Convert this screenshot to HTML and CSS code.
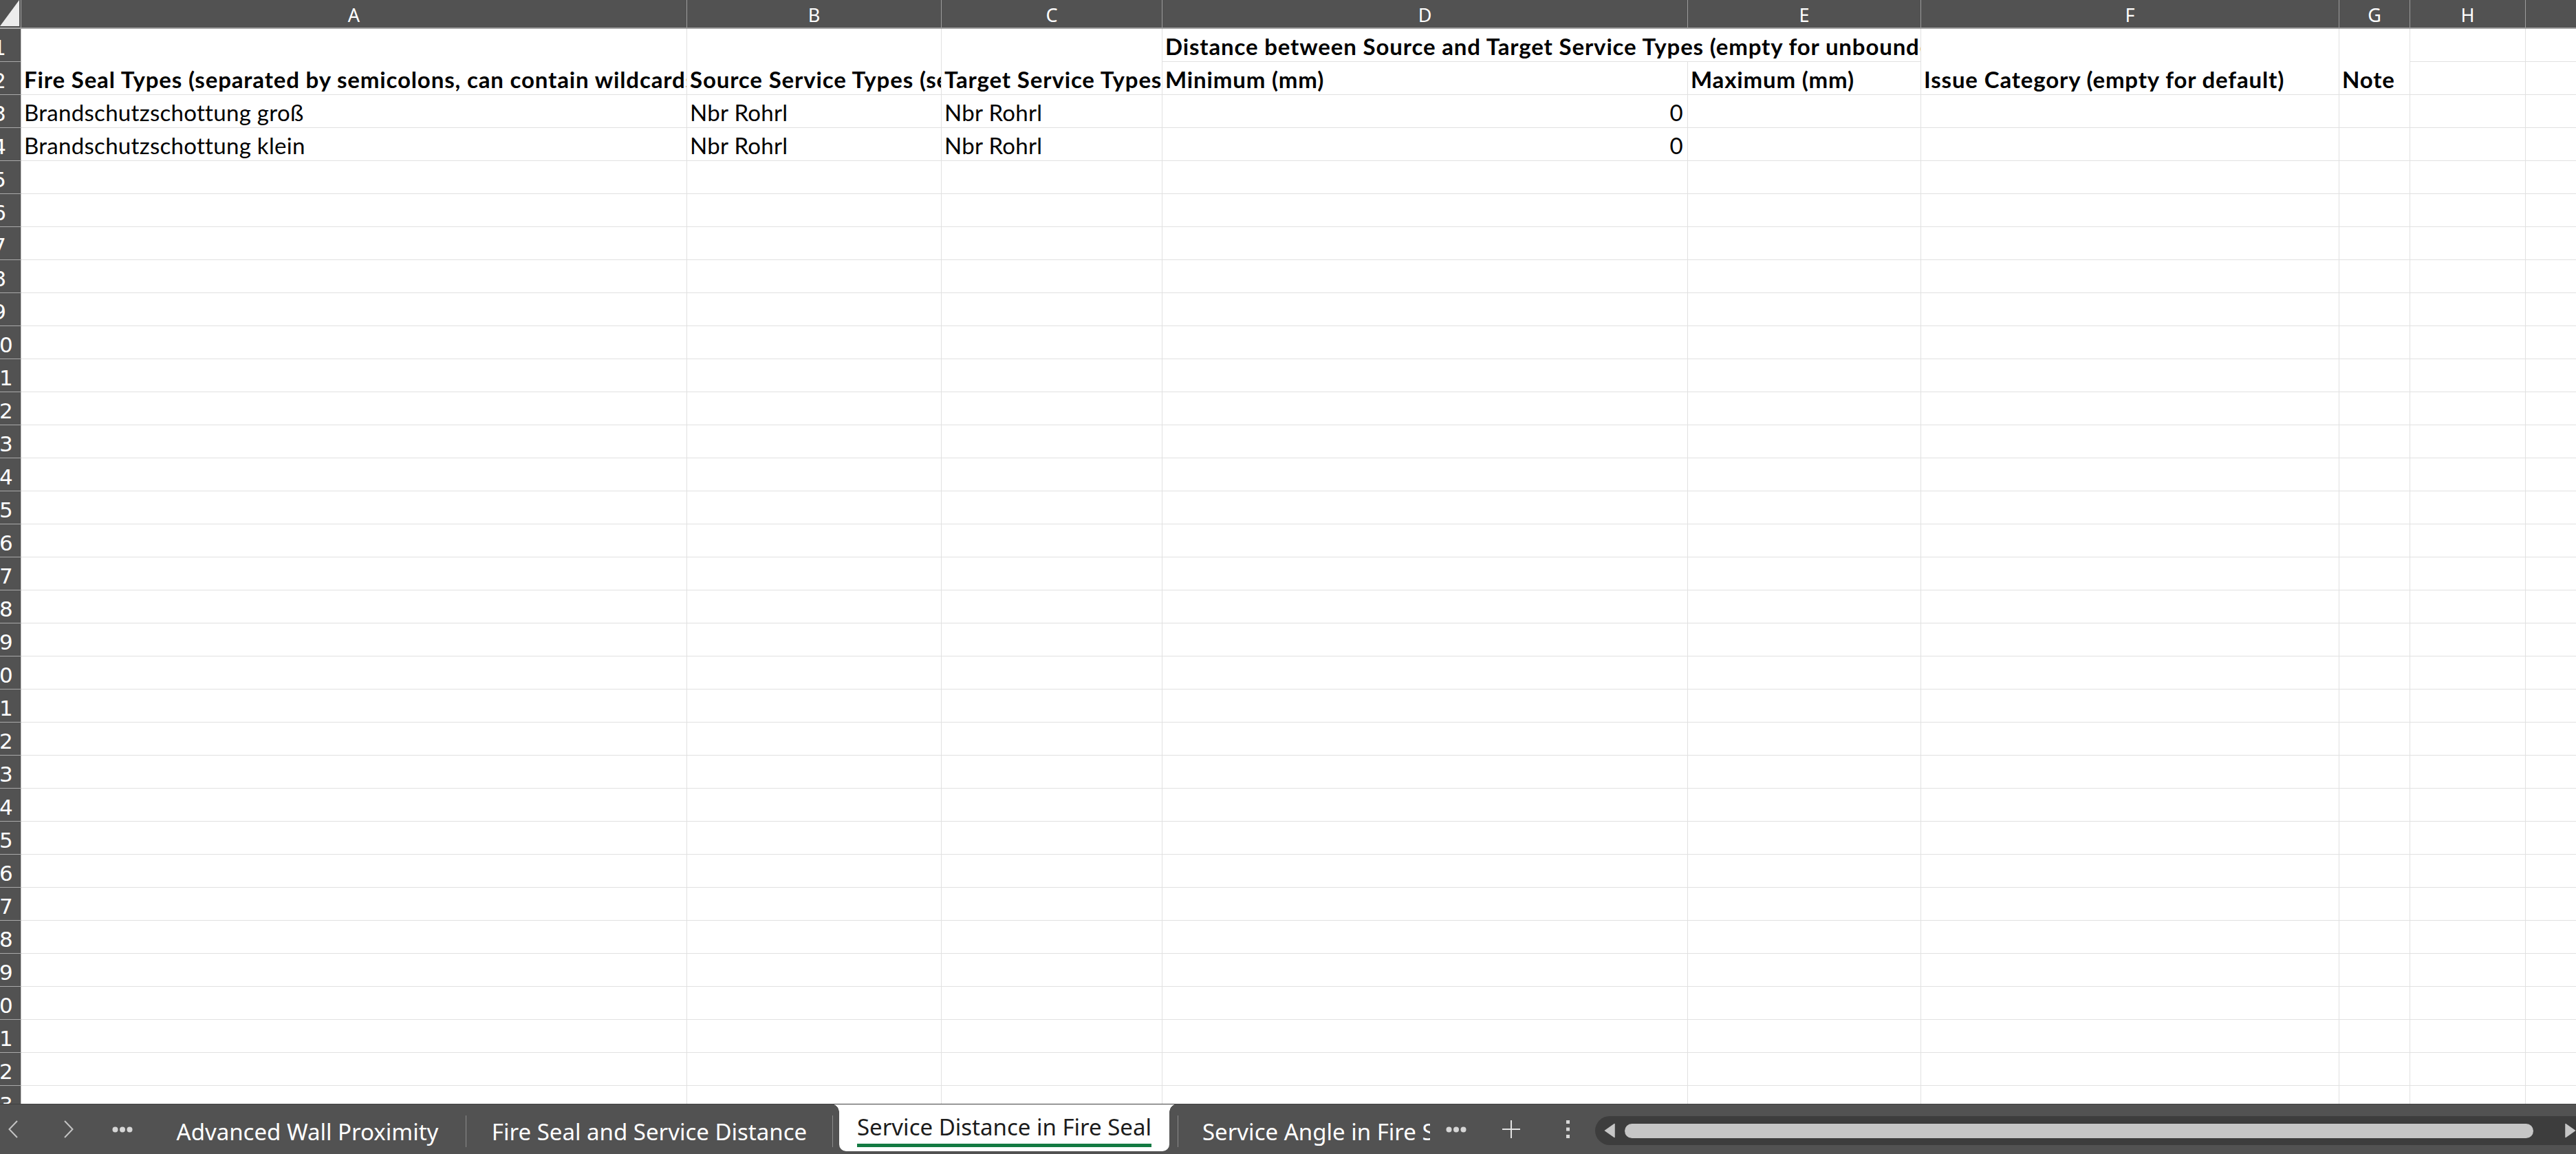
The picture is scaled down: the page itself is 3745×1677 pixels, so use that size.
FILE: index.html
```html
<!DOCTYPE html>
<html lang="de">
<head>
<meta charset="utf-8">
<title>Service Distance in Fire Seal</title>
<link rel="stylesheet" href="styles.css">
</head>
<body>
<div class="app">
  <div class="sheet">
    <div class="corner"></div>
    <div class="ch">A</div><div class="ch">B</div><div class="ch">C</div><div class="ch">D</div><div class="ch">E</div><div class="ch">F</div><div class="ch">G</div><div class="ch">H</div><div class="ch">I</div>

    <div class="rh"><span>1</span></div>
    <div class="c b v2">Fire Seal Types (separated by semicolons, can contain wildcards)</div>
    <div class="c b v2">Source Service Types (separated by semicolons, can contain wildcards)</div>
    <div class="c b v2">Target Service Types (separated by semicolons, can contain wildcards)</div>
    <div class="c b h2">Distance between Source and Target Service Types (empty for unbounded)</div>
    <div class="c b v2">Issue Category (empty for default)</div>
    <div class="c b v2">Note</div>
    <div class="c"></div><div class="c"></div>

    <div class="rh"><span>2</span></div>
    <div class="c b">Minimum (mm)</div>
    <div class="c b">Maximum (mm)</div>
    <div class="c"></div><div class="c"></div>

    <div class="rh"><span>3</span></div><div class="c">Brandschutzschottung groß</div><div class="c">Nbr Rohrl</div><div class="c">Nbr Rohrl</div><div class="c r">0</div><div class="c"></div><div class="c"></div><div class="c"></div><div class="c"></div><div class="c"></div>
    <div class="rh"><span>4</span></div><div class="c">Brandschutzschottung klein</div><div class="c">Nbr Rohrl</div><div class="c">Nbr Rohrl</div><div class="c r">0</div><div class="c"></div><div class="c"></div><div class="c"></div><div class="c"></div><div class="c"></div>
    <div class="rh"><span>5</span></div><div class="c"></div><div class="c"></div><div class="c"></div><div class="c"></div><div class="c"></div><div class="c"></div><div class="c"></div><div class="c"></div><div class="c"></div>
    <div class="rh"><span>6</span></div><div class="c"></div><div class="c"></div><div class="c"></div><div class="c"></div><div class="c"></div><div class="c"></div><div class="c"></div><div class="c"></div><div class="c"></div>
    <div class="rh"><span>7</span></div><div class="c"></div><div class="c"></div><div class="c"></div><div class="c"></div><div class="c"></div><div class="c"></div><div class="c"></div><div class="c"></div><div class="c"></div>
    <div class="rh"><span>8</span></div><div class="c"></div><div class="c"></div><div class="c"></div><div class="c"></div><div class="c"></div><div class="c"></div><div class="c"></div><div class="c"></div><div class="c"></div>
    <div class="rh"><span>9</span></div><div class="c"></div><div class="c"></div><div class="c"></div><div class="c"></div><div class="c"></div><div class="c"></div><div class="c"></div><div class="c"></div><div class="c"></div>
    <div class="rh"><span>10</span></div><div class="c"></div><div class="c"></div><div class="c"></div><div class="c"></div><div class="c"></div><div class="c"></div><div class="c"></div><div class="c"></div><div class="c"></div>
    <div class="rh"><span>11</span></div><div class="c"></div><div class="c"></div><div class="c"></div><div class="c"></div><div class="c"></div><div class="c"></div><div class="c"></div><div class="c"></div><div class="c"></div>
    <div class="rh"><span>12</span></div><div class="c"></div><div class="c"></div><div class="c"></div><div class="c"></div><div class="c"></div><div class="c"></div><div class="c"></div><div class="c"></div><div class="c"></div>
    <div class="rh"><span>13</span></div><div class="c"></div><div class="c"></div><div class="c"></div><div class="c"></div><div class="c"></div><div class="c"></div><div class="c"></div><div class="c"></div><div class="c"></div>
    <div class="rh"><span>14</span></div><div class="c"></div><div class="c"></div><div class="c"></div><div class="c"></div><div class="c"></div><div class="c"></div><div class="c"></div><div class="c"></div><div class="c"></div>
    <div class="rh"><span>15</span></div><div class="c"></div><div class="c"></div><div class="c"></div><div class="c"></div><div class="c"></div><div class="c"></div><div class="c"></div><div class="c"></div><div class="c"></div>
    <div class="rh"><span>16</span></div><div class="c"></div><div class="c"></div><div class="c"></div><div class="c"></div><div class="c"></div><div class="c"></div><div class="c"></div><div class="c"></div><div class="c"></div>
    <div class="rh"><span>17</span></div><div class="c"></div><div class="c"></div><div class="c"></div><div class="c"></div><div class="c"></div><div class="c"></div><div class="c"></div><div class="c"></div><div class="c"></div>
    <div class="rh"><span>18</span></div><div class="c"></div><div class="c"></div><div class="c"></div><div class="c"></div><div class="c"></div><div class="c"></div><div class="c"></div><div class="c"></div><div class="c"></div>
    <div class="rh"><span>19</span></div><div class="c"></div><div class="c"></div><div class="c"></div><div class="c"></div><div class="c"></div><div class="c"></div><div class="c"></div><div class="c"></div><div class="c"></div>
    <div class="rh"><span>20</span></div><div class="c"></div><div class="c"></div><div class="c"></div><div class="c"></div><div class="c"></div><div class="c"></div><div class="c"></div><div class="c"></div><div class="c"></div>
    <div class="rh"><span>21</span></div><div class="c"></div><div class="c"></div><div class="c"></div><div class="c"></div><div class="c"></div><div class="c"></div><div class="c"></div><div class="c"></div><div class="c"></div>
    <div class="rh"><span>22</span></div><div class="c"></div><div class="c"></div><div class="c"></div><div class="c"></div><div class="c"></div><div class="c"></div><div class="c"></div><div class="c"></div><div class="c"></div>
    <div class="rh"><span>23</span></div><div class="c"></div><div class="c"></div><div class="c"></div><div class="c"></div><div class="c"></div><div class="c"></div><div class="c"></div><div class="c"></div><div class="c"></div>
    <div class="rh"><span>24</span></div><div class="c"></div><div class="c"></div><div class="c"></div><div class="c"></div><div class="c"></div><div class="c"></div><div class="c"></div><div class="c"></div><div class="c"></div>
    <div class="rh"><span>25</span></div><div class="c"></div><div class="c"></div><div class="c"></div><div class="c"></div><div class="c"></div><div class="c"></div><div class="c"></div><div class="c"></div><div class="c"></div>
    <div class="rh"><span>26</span></div><div class="c"></div><div class="c"></div><div class="c"></div><div class="c"></div><div class="c"></div><div class="c"></div><div class="c"></div><div class="c"></div><div class="c"></div>
    <div class="rh"><span>27</span></div><div class="c"></div><div class="c"></div><div class="c"></div><div class="c"></div><div class="c"></div><div class="c"></div><div class="c"></div><div class="c"></div><div class="c"></div>
    <div class="rh"><span>28</span></div><div class="c"></div><div class="c"></div><div class="c"></div><div class="c"></div><div class="c"></div><div class="c"></div><div class="c"></div><div class="c"></div><div class="c"></div>
    <div class="rh"><span>29</span></div><div class="c"></div><div class="c"></div><div class="c"></div><div class="c"></div><div class="c"></div><div class="c"></div><div class="c"></div><div class="c"></div><div class="c"></div>
    <div class="rh"><span>30</span></div><div class="c"></div><div class="c"></div><div class="c"></div><div class="c"></div><div class="c"></div><div class="c"></div><div class="c"></div><div class="c"></div><div class="c"></div>
    <div class="rh"><span>31</span></div><div class="c"></div><div class="c"></div><div class="c"></div><div class="c"></div><div class="c"></div><div class="c"></div><div class="c"></div><div class="c"></div><div class="c"></div>
    <div class="rh"><span>32</span></div><div class="c"></div><div class="c"></div><div class="c"></div><div class="c"></div><div class="c"></div><div class="c"></div><div class="c"></div><div class="c"></div><div class="c"></div>
    <div class="rh"><span>33</span></div><div class="c"></div><div class="c"></div><div class="c"></div><div class="c"></div><div class="c"></div><div class="c"></div><div class="c"></div><div class="c"></div><div class="c"></div>
  </div>

  <div class="tabbar">
    <div class="nav prev"><svg width="14" height="26" viewBox="0 0 14 26"><polyline points="13,1 1.5,13 13,25" fill="none" stroke="#c4c4c4" stroke-width="2"/></svg></div>
    <div class="nav next"><svg width="14" height="26" viewBox="0 0 14 26"><polyline points="1,1 12.5,13 1,25" fill="none" stroke="#c4c4c4" stroke-width="2"/></svg></div>
    <div class="more first"><svg width="30" height="9" viewBox="0 0 30 9"><circle cx="4.5" cy="4.5" r="4" fill="#d6d6d6"/><circle cx="15" cy="4.5" r="4" fill="#d6d6d6"/><circle cx="25.5" cy="4.5" r="4" fill="#d6d6d6"/></svg></div>
    <div class="tab t1">Advanced Wall Proximity</div>
    <div class="sep"></div>
    <div class="tab t2">Fire Seal and Service Distance</div>
    <div class="sep"></div>
    <div class="tab active"><span class="label">Service Distance in Fire Seal</span></div>
    <div class="sep after"></div>
    <div class="tab t4">Service Angle in Fire Seal</div>
    <div class="more second"><svg width="30" height="9" viewBox="0 0 30 9"><circle cx="4.5" cy="4.5" r="4" fill="#d6d6d6"/><circle cx="15" cy="4.5" r="4" fill="#d6d6d6"/><circle cx="25.5" cy="4.5" r="4" fill="#d6d6d6"/></svg></div>
    <div class="add"><svg width="26" height="26" viewBox="0 0 26 26"><path d="M13 0V26M0 13H26" stroke="#e2e2e2" stroke-width="2" fill="none"/></svg></div>
    <div class="kebab"><svg width="5" height="26" viewBox="0 0 5 26"><rect x="0" y="0" width="5" height="5" fill="#d8d8d8"/><rect x="0" y="10.5" width="5" height="5" fill="#d8d8d8"/><rect x="0" y="21" width="5" height="5" fill="#d8d8d8"/></svg></div>
    <div class="hscroll">
      <div class="arrow"><svg width="16" height="22" viewBox="0 0 16 22"><path d="M15 1.5 L15 20.5 L1.5 11 Z" fill="#c6c6c6" stroke="#c6c6c6" stroke-width="1.5" stroke-linejoin="round"/></svg></div>
      <div class="thumb"></div>
      <div class="arrow right"><svg width="16" height="22" viewBox="0 0 16 22"><path d="M1 1.5 L1 20.5 L14.5 11 Z" fill="#c6c6c6" stroke="#c6c6c6" stroke-width="1.5" stroke-linejoin="round"/></svg></div>
    </div>
  </div>
</div>
</body>
</html>
```

FILE: styles.css
```css
* { box-sizing: border-box; }

html, body {
  margin: 0;
  padding: 0;
}

body {
  width: 3745px;
  height: 1677px;
  overflow: hidden;
  background: #ffffff;
  font-family: Lato, "Liberation Sans", sans-serif;
}

.app {
  display: flex;
  flex-direction: column;
  height: 1677px;
}

/* ---------- sheet grid ---------- */
.sheet {
  flex: 1;
  min-height: 0;
  overflow: hidden;
  display: grid;
  grid-template-columns: 31px 968px 370px 321px 764px 339px 608px 103px 168px 168px;
  grid-template-rows: 42px repeat(33, 48px);
}

.corner {
  position: relative;
  background: #525252;
  border-right: 1px solid #a3a3a3;
  border-bottom: 2px solid #a6a6a6;
}

.corner::after {
  content: "";
  position: absolute;
  left: 0;
  top: 0;
  width: 28px;
  height: 38px;
  background: #ececec;
  clip-path: polygon(100% 0, 100% 100%, 0 100%);
}

.ch {
  background: #525252;
  color: #ffffff;
  border-right: 1px solid #9c9c9c;
  border-bottom: 2px solid #a6a6a6;
  text-align: center;
  font-family: "Noto Sans", "Open Sans", sans-serif;
  font-size: 27px;
  line-height: 36px;
  padding-top: 4px;
  overflow: hidden;
  white-space: nowrap;
}

.rh {
  background: #525252;
  border-right: 1px solid #c4c4c4;
  border-bottom: 1px solid #a9a9a9;
  overflow: hidden;
  display: flex;
  align-items: flex-end;
  padding-bottom: 4px;
}

.rh span {
  flex: none;
  width: 64px;
  margin-left: -33px;
  text-align: center;
  color: #ffffff;
  font-family: "DejaVu Sans", sans-serif;
  font-size: 31px;
  line-height: 1;
}

.c {
  border-right: 1px solid #e1e1e1;
  border-bottom: 1px solid #e1e1e1;
  display: flex;
  align-items: flex-end;
  padding: 0 6px 5px 4px;
  overflow: hidden;
  white-space: nowrap;
  font-size: 33px;
  letter-spacing: 0.3px;
  line-height: 1;
  color: #000000;
}

.b {
  font-weight: 700;
  letter-spacing: 0.85px;
}
.r { justify-content: flex-end; }
.v2 { grid-row: span 2; }
.h2 { grid-column: span 2; }

/* ---------- sheet tab bar ---------- */
.tabbar {
  flex: none;
  height: 73px;
  background: #525252;
  border-top: 1px solid #404040;
  display: flex;
  align-items: center;
  overflow: hidden;
  font-family: "Noto Sans", "Open Sans", sans-serif;
  font-size: 33px;
  color: #ffffff;
}

.nav { flex: none; display: flex; }
.nav.prev { margin-left: 12px; }
.nav.next { margin-left: 67px; }

.more { flex: none; display: flex; }
.more.first { margin-left: 56px; }
.more.second { margin-left: 23px; }

.tab {
  flex: none;
  align-self: stretch;
  line-height: 33px;
  padding-top: 23px;
  white-space: nowrap;
  overflow: hidden;
  text-align: center;
}

.tab.t1 { margin-left: 24px; width: 460px; }
.tab.t2 { width: 532px; }

.tab.active {
  position: relative;
  overflow: visible;
  align-self: flex-start;
  margin-top: -1px;
  margin-left: 9px;
  width: 480px;
  height: 69px;
  padding-top: 17px;
  background: #ffffff;
  color: #1c1c1c;
  border-radius: 0 0 10px 10px;
}

.tab.active .label {
  display: inline-block;
  vertical-align: top;
  padding-bottom: 8px;
  border-bottom: 5px solid #137a42;
}

.tab.active::before,
.tab.active::after {
  content: "";
  position: absolute;
  top: 0;
  width: 12px;
  height: 12px;
}

.tab.active::before {
  left: -12px;
  background: radial-gradient(circle at 0 100%, #525252 11.5px, #ffffff 12px);
}

.tab.active::after {
  right: -12px;
  background: radial-gradient(circle at 100% 100%, #525252 11.5px, #ffffff 12px);
}

.tab.t4 {
  width: 366px;
  padding-left: 35px;
  text-align: left;
}

.sep {
  flex: none;
  align-self: flex-start;
  margin-top: 16px;
  width: 1px;
  height: 46px;
  background: #8a8a8a;
}

.sep.after { margin-left: 12px; }

.add { flex: none; display: flex; margin-left: 52px; }
.kebab { flex: none; display: flex; margin-left: 67px; }

.hscroll {
  flex: none;
  align-self: flex-start;
  margin-top: 17px;
  margin-left: 37px;
  width: 1460px;
  height: 42px;
  background: #3d3d3d;
  border-radius: 21px 0 0 21px;
  display: flex;
  align-items: center;
  padding-left: 13px;
}

.arrow { flex: none; display: flex; }
.arrow.right { margin-left: 46px; }

.thumb {
  flex: none;
  margin-left: 14px;
  width: 1321px;
  height: 21px;
  border-radius: 10.5px;
  background: #c6c6c6;
}
```
